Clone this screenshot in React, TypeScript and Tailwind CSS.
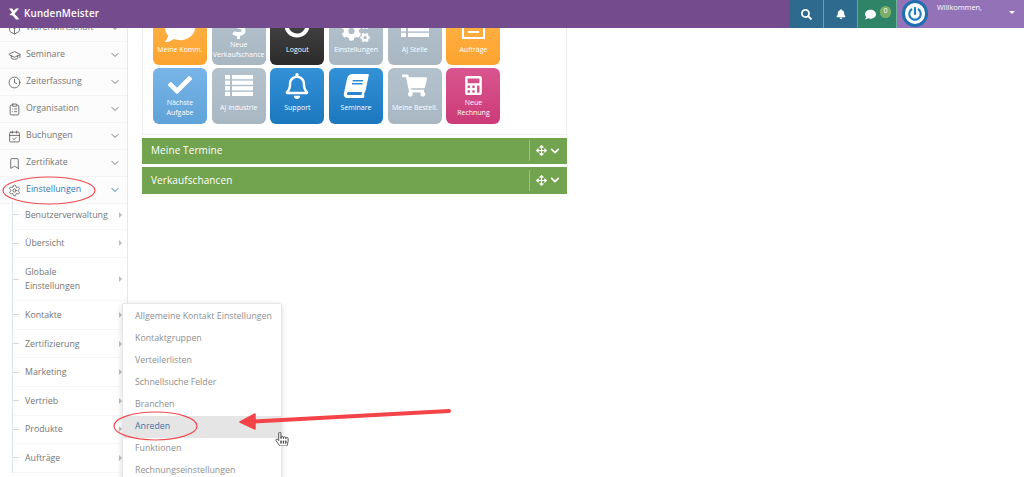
import { Bookmark, CalendarCheck, ChevronDown, ClipboardList, Clock, GraduationCap, Package, Settings } from 'lucide-react'
import { FaArrowsAlt, FaBell, FaBook, FaCalculator, FaCheck, FaChevronDown, FaCogs, FaComment, FaDollarSign, FaHandPointer, FaPowerOff, FaRegBell, FaSearch, FaShoppingCart } from 'react-icons/fa'

const mainMenu = [
  { label: 'Warenwirtschaft', icon: Package },
  { label: 'Seminare', icon: GraduationCap },
  { label: 'Zeiterfassung', icon: Clock },
  { label: 'Organisation', icon: ClipboardList },
  { label: 'Buchungen', icon: CalendarCheck },
  { label: 'Zertifikate', icon: Bookmark },
]

const subMenu = ['Benutzerverwaltung', 'Übersicht', 'Globale Einstellungen', 'Kontakte', 'Zertifizierung', 'Marketing', 'Vertrieb', 'Produkte', 'Aufträge']

const popupItems = ['Allgemeine Kontakt Einstellungen', 'Kontaktgruppen', 'Verteilerlisten', 'Schnellsuche Felder', 'Branchen', 'Anreden', 'Funktionen', 'Rechnungseinstellungen']

// Vier Zeilen, FaList hat nur drei
function ListIcon({ className }: { className?: string }) {
  return (
    <svg className={className} width="28" height="21" viewBox="0 0 28 21" fill="currentColor">
      {[0, 5.6, 11.2, 16.8].map((y) => (
        <g key={y}>
          <rect x="0" y={y} width="5" height="4.2" />
          <rect x="7" y={y} width="21" height="4.2" />
        </g>
      ))}
    </svg>
  )
}

function OrderIcon({ className }: { className?: string }) {
  return (
    <svg className={className} width="23" height="20" viewBox="0 0 23 20" fill="none" stroke="currentColor" strokeWidth="2">
      <rect x="1" y="1" width="21" height="18" />
      <path d="M6 8 H17 M6 13 H17" />
    </svg>
  )
}

const orange = 'bg-gradient-to-b from-[#ffb347] to-[#fda32e]'
const gray = 'bg-gradient-to-b from-[#b4c2ce] to-[#a9b7c3]'
const blue = 'bg-gradient-to-b from-[#3391d8] to-[#1b78bf]'

const tiles = [
  { label: 'Meine Komm.', icon: FaComment, color: orange, iconClass: 'text-[30px] mt-[2px]' },
  { label: 'Neue Verkaufschance', icon: FaDollarSign, color: gray, iconClass: 'text-[25px] -mt-[2px]' },
  { label: 'Logout', icon: FaPowerOff, color: 'bg-gradient-to-b from-[#4a4a4a] to-[#2b2b2b]', iconClass: 'text-[26px] -mt-[6px]' },
  { label: 'Einstellungen', icon: FaCogs, color: gray, iconClass: 'text-[28px] mt-[6px]' },
  { label: 'AJ Stelle', icon: ListIcon, color: gray, iconClass: '-mt-[2px]' },
  { label: 'Aufträge', icon: OrderIcon, color: orange, iconClass: 'mt-[3px]' },
  { label: 'Nächste Aufgabe', icon: FaCheck, color: 'bg-gradient-to-b from-[#78b4e8] to-[#5fa3d8]', iconClass: 'text-[24px] -mt-[2px]' },
  { label: 'AJ Industrie', icon: ListIcon, color: gray, iconClass: '-mt-[2px]' },
  { label: 'Support', icon: FaRegBell, color: blue, iconClass: 'text-[26px]' },
  { label: 'Seminare', icon: FaBook, color: blue, iconClass: 'text-[24px] -skew-x-12' },
  { label: 'Meine Bestell.', icon: FaShoppingCart, color: gray, iconClass: 'text-[25px] -mt-[1px]' },
  { label: 'Neue Rechnung', icon: FaCalculator, color: 'bg-gradient-to-b from-[#d9558f] to-[#cc3a78]', iconClass: 'text-[19px] -mt-[1px]', labelClass: 'w-[40px]' },
]

function Header() {
  return (
    <header className="relative z-20 flex h-7 shrink-0 items-stretch justify-between bg-[#744c8e] text-white">
      <div className="flex items-center gap-[5px] pl-[9px]">
        <svg width="10" height="12" viewBox="0 0 10 12" fill="white">
          <path d="M0 0.5 L3.2 0.5 L5.4 3.4 L3.8 5.6 Z" />
          <path d="M0.4 7 L7 0.5 L10 0.5 L4 7.6 Z" />
          <path d="M3 6.8 L5.2 5.4 L9.8 10.4 Q10.2 11.5 9 11.5 L7 11.5 Z" />
        </svg>
        <span className="text-[9.8px] font-semibold tracking-[0.2px]">KundenMeister</span>
      </div>
      <div className="flex items-stretch">
        <div className="flex w-[34px] items-center justify-center bg-[#2e6a8e]">
          <FaSearch className="text-[11px]" />
        </div>
        <div className="flex w-[34px] items-center justify-center border-l border-[#6f9ab4] bg-[#2e6a8e]">
          <FaBell className="text-[10px]" />
        </div>
        <div className="flex w-[39px] items-center justify-center gap-[4px] border-l border-[#6f9ab4] bg-[#2f8468] pl-[2px]">
          <FaComment className="text-[11px]" />
          <span className="mb-[5px] flex h-[12px] w-[11px] items-center justify-center rounded-full bg-[#7fae6a] text-[7px]">0</span>
        </div>
        <div className="flex w-[128px] border-l border-[#6fb09a] bg-[#9472b8] pl-[5px]">
          <div className="flex h-[27px] w-[26px] items-center justify-center rounded-full border-[3px] border-[#1f6fb0] bg-white">
            <FaPowerOff className="text-[14px] text-[#1f7fc4]" />
          </div>
          <span className="ml-[9px] mt-[1px] text-[7.4px] leading-[12px]">Willkommen,</span>
          <span className="ml-auto mr-[9px] mt-[11px] h-0 w-0 border-x-[3.5px] border-t-[3.5px] border-x-transparent border-t-white" />
        </div>
      </div>
    </header>
  )
}

function Sidebar() {
  return (
    <aside className="-mt-[13px] w-[128px] shrink-0 border-r border-[#e8e8e8] bg-white text-[8.8px] text-[#757575]">
      {mainMenu.map((item) => (
        <div key={item.label} className="flex h-[27px] items-center border-b border-[#f4f4f4] bg-[#fcfcfc] pl-[8px] pr-[6px]">
          <item.icon size={13} strokeWidth={1.5} className="text-[#555]" />
          <span className="ml-[5px]">{item.label}</span>
          <ChevronDown size={12} className="ml-auto text-[#777]" />
        </div>
      ))}
      <div className="flex h-[27px] items-center border-b border-[#f4f4f4] bg-[#fcfcfc] pl-[8px] pr-[6px] text-[#3b78b5]">
        <Settings size={13} strokeWidth={1.5} className="text-[#555]" />
        <span className="ml-[5px]">Einstellungen</span>
        <ChevronDown size={12} className="ml-auto" />
      </div>
      <div className="-mt-[3px] ml-[12px] border-l border-[#d8e6f0]">
        {subMenu.map((label) => (
          <div
            key={label}
            className={`flex items-center border-b border-[#f7f7f7] pr-[5px] ${label === 'Globale Einstellungen' ? 'h-[43px]' : 'h-[28.6px]'}`}
          >
            <span className="h-px w-[6px] bg-[#d8d8d8]" />
            <span className="ml-[6px] w-[86px] leading-[14px]">{label}</span>
            <span className="ml-auto h-0 w-0 border-y-[3.5px] border-l-[3.5px] border-y-transparent border-l-[#bbb]" />
          </div>
        ))}
      </div>
    </aside>
  )
}

function GreenBar({ title }: { title: string }) {
  return (
    <div className="flex h-[26.5px] items-center bg-[#72a34f] pl-[9px] text-white">
      <span className="text-[10px] tracking-[0.1px]">{title}</span>
      <span className="ml-auto h-[21px] w-px bg-[#9dbf84]" />
      <FaArrowsAlt className="ml-[6px] text-[11px]" />
      <FaChevronDown className="ml-[3px] mr-[7px] text-[10px]" />
    </div>
  )
}

function Main() {
  return (
    <main className="-mt-[28px] ml-[14px] flex w-[425px] flex-col gap-[3px]">
      <div className="border border-[#eeeeee] bg-white pb-[10px] pl-[10px] pt-[8.5px]">
        <div className="grid grid-cols-[repeat(6,54px)] gap-x-[4.7px] gap-y-[3px]">
          {tiles.map((tile) => (
            <div key={tile.label} className={`flex h-[55.5px] flex-col items-center rounded-[6px] px-px text-center text-white ${tile.color}`}>
              <div className="flex h-[29px] shrink-0 items-center pt-[7px]">
                <tile.icon className={tile.iconClass} />
              </div>
              <div className={`flex h-[22px] items-center text-[7px] leading-[10px] ${tile.labelClass ?? ''}`}>{tile.label}</div>
            </div>
          ))}
        </div>
      </div>
      <GreenBar title="Meine Termine" />
      <GreenBar title="Verkaufschancen" />
    </main>
  )
}

function Overlays() {
  return (
    <>
      <div className="absolute left-[122px] top-[303px] z-10 w-[160px] rounded-[2px] border border-[#e6e6e6] bg-white pt-[2px] text-[8.8px] text-[#8f8f8f] shadow-[0_2px_6px_rgba(0,0,0,0.15)]">
        {popupItems.map((item) => (
          <div key={item} className={`flex h-[22px] items-center whitespace-nowrap pl-3 ${item === 'Anreden' ? 'bg-[#e5e5e5] text-[#3f6fa5]' : ''}`}>
            {item}
          </div>
        ))}
      </div>
      <svg className="pointer-events-none absolute left-0 top-0 z-30" width="1024" height="477" fill="none">
        <ellipse cx="49" cy="190.5" rx="46" ry="13.5" stroke="#ee4b50" strokeWidth="1.2" />
        <ellipse cx="155.5" cy="426" rx="41.5" ry="14" stroke="#ee4b50" strokeWidth="1.2" />
        <path d="M449 411 L253 421.5" stroke="#f4444a" strokeWidth="4" strokeLinecap="round" />
        <path d="M240 422 L255 414 L255 429 Z" fill="#f4444a" stroke="#f4444a" strokeWidth="1.5" strokeLinejoin="round" />
      </svg>
      <FaHandPointer className="absolute left-[275px] top-[432px] z-30 text-[14px] text-white [&_path]:stroke-[#333] [&_path]:stroke-[30px]" />
    </>
  )
}

export default function App() {
  return (
    <div className="relative flex h-[477px] w-[1024px] flex-col overflow-hidden bg-white font-['Open_Sans',sans-serif]">
      <Header />
      <div className="flex min-h-0 flex-1">
        <Sidebar />
        <Main />
      </div>
      <Overlays />
    </div>
  )
}
